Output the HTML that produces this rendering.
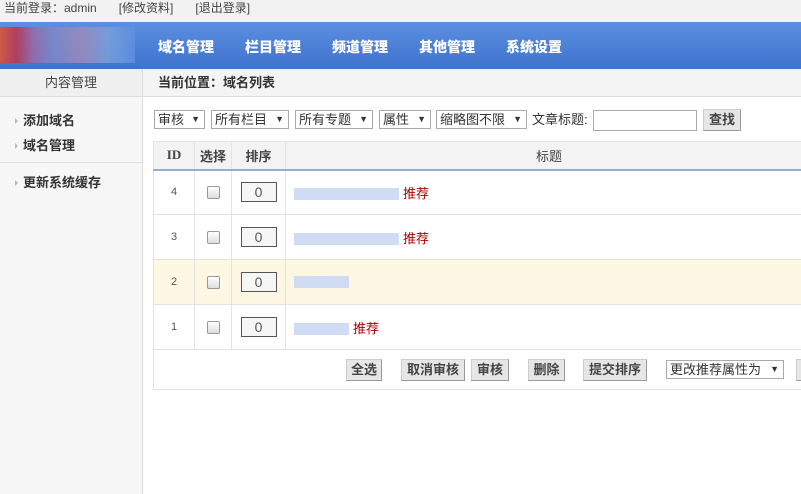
<!DOCTYPE html><html><head><meta charset="utf-8"><style>
*{margin:0;padding:0;box-sizing:border-box}
body{width:801px;height:494px;overflow:hidden;font:12px "Liberation Sans","Noto Sans CJK SC",sans-serif;color:#333;background:#fff;position:relative}
.top{height:22px;background:#f2f2f2;line-height:16px;padding-left:4px;font-size:12px;color:#444}
.top span{margin-right:22px}
.hd{position:absolute;top:22px;left:0;width:801px;height:47px;background:linear-gradient(#5b8fe0,#3f73cf)}
.logo{position:absolute;left:0;top:5px;width:135px;height:36px;background:linear-gradient(90deg,#e4542a 0,#c0334a 12%,#9a6aa8 25%,#7e88c8 40%,#a08ab8 60%,#7aa0da 80%,#5b8fe0 100%);opacity:.85}
.nav{position:absolute;left:158px;top:15px;color:#fff;font-size:14px;font-weight:bold;white-space:nowrap}
.nav b{display:inline-block;width:87px}
.side{position:absolute;top:69px;left:0;width:143px;height:425px;background:#f7f7f7;border-right:1px solid #ddd}
.sh{height:28px;line-height:28px;text-align:center;border-bottom:1px solid #ddd;background:#f0f0f0;font-size:13px;color:#444}
.side p{padding-left:23px;font-weight:bold;font-size:13px;color:#333;position:relative}
.side p:before{content:"";position:absolute;left:15px;top:8px;border:3px solid transparent;border-left-color:#bbb;border-right:0}
.crumb{position:absolute;top:69px;left:143px;width:658px;height:28px;border-bottom:1px solid #ddd;background:#f4f4f4;line-height:28px;padding-left:15px;font-weight:bold;font-size:13px}
.sel{position:absolute;top:110px;height:19px;border:1px solid #aaa;background:#fff;font-size:13px;line-height:17px;padding-left:3px}
.sel i{font-style:normal;font-size:9px;position:absolute;right:4px;top:0}
.btn{position:absolute;height:22px;background:#e6e6e6;border:1px solid #ccc;border-right-color:#999;border-bottom-color:#999;font-size:13px;font-weight:bold;color:#444;text-align:center;line-height:20px}
table{position:absolute;top:141px;left:153px;width:660px;border-collapse:collapse}
td,th{border:1px solid #e3e3e3;text-align:center;vertical-align:middle}
th{height:28px;background:#f3f3f3;font-size:13px;color:#444;border-bottom:2px solid #8fb1d8}
td{height:45px;font-size:11px;color:#555}
.cb{display:inline-block;width:13px;height:13px;border:1px solid #999;border-radius:2px;background:linear-gradient(#fff,#ddd);vertical-align:middle}
.num{display:inline-block;width:36px;height:20px;border:1px solid #555;background:#f6f6f6;font-size:14px;line-height:18px;vertical-align:middle}
.t{text-align:left;padding-left:8px}
.bl{display:inline-block;height:12px;background:#d0dcf4;vertical-align:-2px;margin-right:4px}
.r{color:#a00;font-size:13px}
</style></head><body>
<div class="top"><span>当前登录：admin</span><span>[修改资料]</span><span>[退出登录]</span></div>
<div class="hd"><div class="logo"></div><div class="nav"><b>域名管理</b><b>栏目管理</b><b>频道管理</b><b>其他管理</b><b>系统设置</b></div></div>
<div class="side"><div class="sh">内容管理</div>
<p style="margin-top:13px">添加域名</p><p style="margin-top:6px">域名管理</p>
<div style="border-top:1px solid #ddd;margin-top:8px;height:1px"></div>
<p style="margin-top:9px">更新系统缓存</p></div>
<div class="crumb">当前位置：域名列表</div>
<div class="sel" style="left:154px;width:51px">审核<i>▼</i></div>
<div class="sel" style="left:211px;width:78px">所有栏目<i>▼</i></div>
<div class="sel" style="left:295px;width:78px">所有专题<i>▼</i></div>
<div class="sel" style="left:379px;width:52px">属性<i>▼</i></div>
<div class="sel" style="left:436px;width:91px">缩略图不限<i>▼</i></div>
<div style="position:absolute;left:532px;top:110px;font-size:13px;line-height:19px">文章标题:</div>
<div style="position:absolute;left:593px;top:110px;width:104px;height:21px;border:1px solid #aaa"></div>
<div class="btn" style="left:703px;top:109px;width:38px">查找</div>
<table><tr><th style="width:41px;font-family:'Liberation Serif',serif">ID</th><th style="width:37px">选择</th><th style="width:54px">排序</th><th style="font-weight:normal">标题</th></tr>
<tr><td>4</td><td><span class="cb"></span></td><td><span class="num">0</span></td><td class="t"><span class="bl" style="width:105px"></span><span class="r">推荐</span></td></tr>
<tr><td>3</td><td><span class="cb"></span></td><td><span class="num">0</span></td><td class="t"><span class="bl" style="width:105px"></span><span class="r">推荐</span></td></tr>
<tr style="background:#fdf7e3"><td>2</td><td><span class="cb"></span></td><td><span class="num">0</span></td><td class="t"><span class="bl" style="width:55px"></span></td></tr>
<tr><td>1</td><td><span class="cb"></span></td><td><span class="num">0</span></td><td class="t"><span class="bl" style="width:55px"></span><span class="r">推荐</span></td></tr>
<tr><td colspan="4" style="height:40px"></td></tr></table>
<div class="btn" style="left:346px;top:359px;width:36px">全选</div>
<div class="btn" style="left:401px;top:359px;width:64px">取消审核</div>
<div class="btn" style="left:471px;top:359px;width:38px">审核</div>
<div class="btn" style="left:528px;top:359px;width:37px">删除</div>
<div class="btn" style="left:583px;top:359px;width:64px">提交排序</div>
<div class="sel" style="left:666px;top:360px;width:118px">更改推荐属性为<i>▼</i></div>
<div class="btn" style="left:796px;top:359px;width:10px"></div>
</body></html>
